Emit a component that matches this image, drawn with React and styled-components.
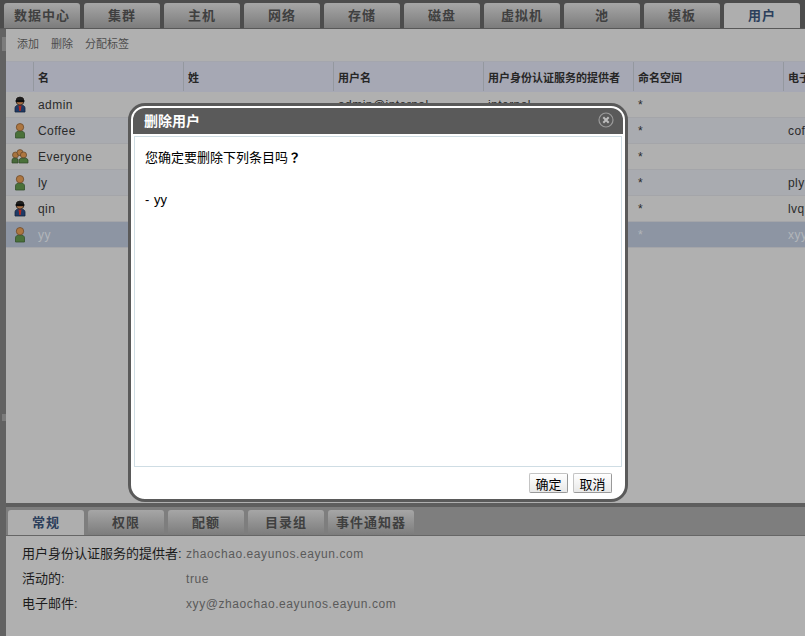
import React from "react";
import styled, { createGlobalStyle } from "styled-components";

const Global = createGlobalStyle`
  html, body { margin: 0; padding: 0; background: #4c4c4c; overflow: hidden; }
  * { box-sizing: border-box; }
`;
const FONT = `"Liberation Sans", "Noto Sans CJK SC", sans-serif`;

const Page = styled.div`
  position: relative; width: 805px; height: 636px; overflow: hidden;
  font-family: ${FONT}; font-size: 12px; color: #2a2a2a;
  display: flex; flex-direction: column; background: #4c4c4c;
`;
const TopTabs = styled.div`
  height: 29px; padding: 3px 0 0 4px; display: flex; gap: 4px; flex: none;
  border-bottom: 1px solid #585858; overflow: hidden;
`;
const MainTab = styled.div`
  width: ${p => p.$w || 76}px; flex: none; height: 25px; border-radius: 3px 3px 0 0;
  display: flex; align-items: center; justify-content: center; padding-bottom: 3px;
  font-size: 13px; font-weight: 700; letter-spacing: 1px;
  color: ${p => (p.$active ? "#2c3f5c" : "#404040")};
  background: ${p => p.$active ? "#aeaeae" : "linear-gradient(#a6a6a6, #7c7c7c)"};
`;
const Workspace = styled.div`flex: 1; display: flex; min-height: 0;`;
const Rail = styled.div`
  width: 6px; flex: none; background: #626262; display: flex; flex-direction: column; align-items: flex-end;
`;
const Grip = styled.div`
  width: 4px; height: ${p => p.$h}px; margin-top: ${p => p.$t}px; flex: none; background: #7c7c7c;
`;
const Content = styled.div`flex: 1; min-width: 0; display: flex; flex-direction: column;`;
const Middle = styled.div`
  height: 474px; flex: none; background: #b0b0b0; display: flex; flex-direction: column;
`;
const Toolbar = styled.div`
  height: 33px; display: flex; align-items: center; padding: 0 11px 4px; gap: 12px; flex: none;
  font-size: 11px; color: #4d4d4d; border-bottom: 1px solid #a4a6ae;
`;
const Row = styled.div`
  display: flex; flex: none; height: ${p => p.$h || 26}px; background: ${p => p.$bg || "#b0b0b0"};
  border-bottom: 1px solid ${p => p.$line || "#a4a5a9"}; white-space: nowrap; overflow: hidden;
`;
const IconCell = styled.div`
  width: 27px; flex: none; display: flex; align-items: center; justify-content: center;
`;
const HeadCell = styled.div`
  width: 150px; flex: none; display: flex; align-items: center; padding-left: 4px;
  font-size: 11px; font-weight: 700; color: #262626; border-left: 1px solid #94989f;
`;
const Cell = styled.div`
  width: 150px; flex: none; display: flex; align-items: center; padding-left: 5px;
  letter-spacing: 0.45px; color: ${p => (p.$sel ? "#b2b5ba" : "#2a2a2a")};
`;
const Splitter = styled.div`height: 4px; background: #5e5e5e; flex: none;`;
const SubTabs = styled.div`
  height: 29px; flex: none; padding: 3px 0 0 2px; display: flex; gap: 4px;
  background: #7e7e7e; border-bottom: 1px solid #666;
`;
const Details = styled.div`
  flex: 1; background: #b0b0b0; padding: 4px 0 0 16px; display: flex; flex-direction: column;
`;
const DetailRow = styled.div`display: flex; height: 25px; align-items: center;`;
const DLabel = styled.div`width: 164px; flex: none; font-size: 13px; color: #1c1c1c; white-space: nowrap;`;
const DValue = styled.div`font-size: 12px; letter-spacing: 0.58px; color: #5a5a5a; padding-top: 2px;`;

const Modal = styled.div`
  position: absolute; left: 128px; top: 103px; width: 500px; height: 399px;
  background: #fff; border: 3px solid #5a5a5a; border-radius: 17px; padding: 2px 2px 0;
  display: flex; flex-direction: column;
`;
const ModalHead = styled.div`
  height: 26px; flex: none; background: #5a5a5a; border-radius: 12px 12px 0 0; padding: 0 9px 2px 11px;
  display: flex; align-items: center; justify-content: space-between;
  color: #fff; font-size: 14px; font-weight: 700;
`;
const ModalBody = styled.div`
  flex: none; height: 331px; margin: 2px 1px 0; border: 1px solid #cfdde4; padding: 10px 10px;
  font-size: 13px; color: #000; display: flex; flex-direction: column; gap: 23px;
`;
const Line = styled.div`line-height: 20px; height: 20px; white-space: nowrap;`;
const QMark = styled.span`font-family: "Noto Sans CJK TC", sans-serif; font-weight: 700;`;
const Dash = styled.span`letter-spacing: 1px;`;
const Foot = styled.div`
  flex: 1; display: flex; justify-content: flex-end; align-items: flex-start; gap: 5px; padding: 6px 11px 0 0;
`;
const Btn = styled.div`
  width: 39px; height: 20px; display: flex; align-items: center; justify-content: center;
  font-size: 13px; color: #000; background: linear-gradient(#fff, #e8e8e8);
  border: 1px solid #c4c4c4; border-right-color: #999; border-bottom-color: #999; border-radius: 2px;
`;

const Person = ({ admin }) => (
  <svg width="16" height="17" viewBox="0 0 16 17">
    {admin ? (
      <>
        <path d="M3 16v-4q0-3 5-3t5 3v4z" fill="#1e3a66" stroke="#16243c" strokeWidth=".8" />
        <path d="M6.5 9.5h3L8.7 15h-1.4z" fill="#b0281f" />
        <circle cx="8" cy="5" r="4" fill="#a96f44" stroke="#222" strokeWidth=".7" />
        <path d="M4 4.5Q4 1 8 1t4 3.5z" fill="#1c1c1c" />
        <rect x="3.8" y="4" width="8.4" height="2.2" fill="#0c0c0c" />
      </>
    ) : (
      <>
        <path d="M3.5 16v-4q0-3 4.5-3t4.5 3v4z" fill="#4a7139" stroke="#34502c" strokeWidth=".8" />
        <circle cx="8" cy="5.2" r="3.7" fill="#ad7640" stroke="#6d4a2b" strokeWidth=".8" />
      </>
    )}
  </svg>
);
const Group = () => (
  <svg width="18" height="15" viewBox="0 0 18 15">
    <circle cx="4.5" cy="6" r="3" fill="#a8743f" stroke="#5f4227" strokeWidth=".7" />
    <circle cx="9" cy="3.6" r="3" fill="#ad7640" stroke="#5f4227" strokeWidth=".7" />
    <circle cx="12.5" cy="6" r="3.1" fill="#ad7640" stroke="#5f4227" strokeWidth=".7" />
    <path d="M1 14v-3q0-2 3-2l3 1v4z" fill="#48693a" stroke="#2f4627" strokeWidth=".7" />
    <path d="M8 14v-3q0-2 4.5-2t4.5 2v3z" fill="#4a7139" stroke="#2f4627" strokeWidth=".7" />
  </svg>
);
const CloseIcon = () => (
  <svg width="16" height="16" viewBox="0 0 16 16">
    <circle cx="8" cy="8" r="7" fill="none" stroke="#9a9a9a" strokeWidth="1.2" />
    <path d="M5.3 5.3l5.4 5.4M10.7 5.3l-5.4 5.4" stroke="#bdbdbd" strokeWidth="2" />
  </svg>
);

const tabs = ["数据中心", "集群", "主机", "网络", "存储", "磁盘", "虚拟机", "池", "模板", "用户"];
const heads = ["名", "姓", "用户名", "用户身份认证服务的提供者", "命名空间", "电子邮件"];
const users = [
  { n: "admin", i: "admin", v: "admin@internal", p: "internal", e: "" },
  { n: "Coffee", i: "user", e: "coffee@zhaochao" },
  { n: "Everyone", i: "group", e: "" },
  { n: "ly", i: "user", e: "ply@zhaochao" },
  { n: "qin", i: "admin", e: "lvqin@zhaochao" },
  { n: "yy", i: "user", e: "xyy@zhaochao", sel: true },
];
const subTabs = [["常规", 76], ["权限", 76], ["配额", 76], ["目录组", 76], ["事件通知器", 86]];

export default function App() {
  return (
    <Page>
      <Global />
      <TopTabs>
        {tabs.map((t, i) => <MainTab key={t} $active={i === 9}>{t}</MainTab>)}
      </TopTabs>
      <Workspace>
        <Rail><Grip $t={8} $h={14} /><Grip $t={363} $h={7} /></Rail>
        <Content>
          <Middle>
            <Toolbar><span>添加</span><span>删除</span><span>分配标签</span></Toolbar>
            <Row $h={30} $bg="#a6a8b4" $line="#a6a8b4">
              <IconCell />
              {heads.map(h => <HeadCell key={h}>{h}</HeadCell>)}
            </Row>
            {users.map((u, i) => (
              <Row key={u.n} $bg={u.sel ? "#8d95a3" : i % 2 ? "#a9abb0" : "#b0b0b0"}>
                <IconCell>{u.i === "group" ? <Group /> : <Person admin={u.i === "admin"} />}</IconCell>
                <Cell $sel={u.sel}>{u.n}</Cell>
                <Cell />
                <Cell>{u.v}</Cell>
                <Cell>{u.p}</Cell>
                <Cell $sel={u.sel}>*</Cell>
                <Cell $sel={u.sel}>{u.e}</Cell>
              </Row>
            ))}
          </Middle>
          <Splitter />
          <SubTabs>
            {subTabs.map(([t, w], i) => <MainTab key={t} $w={w} $active={i === 0}>{t}</MainTab>)}
          </SubTabs>
          <Details>
            <DetailRow><DLabel>用户身份认证服务的提供者:</DLabel><DValue>zhaochao.eayunos.eayun.com</DValue></DetailRow>
            <DetailRow><DLabel>活动的:</DLabel><DValue>true</DValue></DetailRow>
            <DetailRow><DLabel>电子邮件:</DLabel><DValue>xyy@zhaochao.eayunos.eayun.com</DValue></DetailRow>
          </Details>
        </Content>
      </Workspace>
      <Modal>
        <ModalHead><span>删除用户</span><CloseIcon /></ModalHead>
        <ModalBody>
          <Line>您确定要删除下列条目吗<QMark>？</QMark></Line>
          <Line><Dash>-</Dash> yy</Line>
        </ModalBody>
        <Foot><Btn>确定</Btn><Btn>取消</Btn></Foot>
      </Modal>
    </Page>
  );
}
